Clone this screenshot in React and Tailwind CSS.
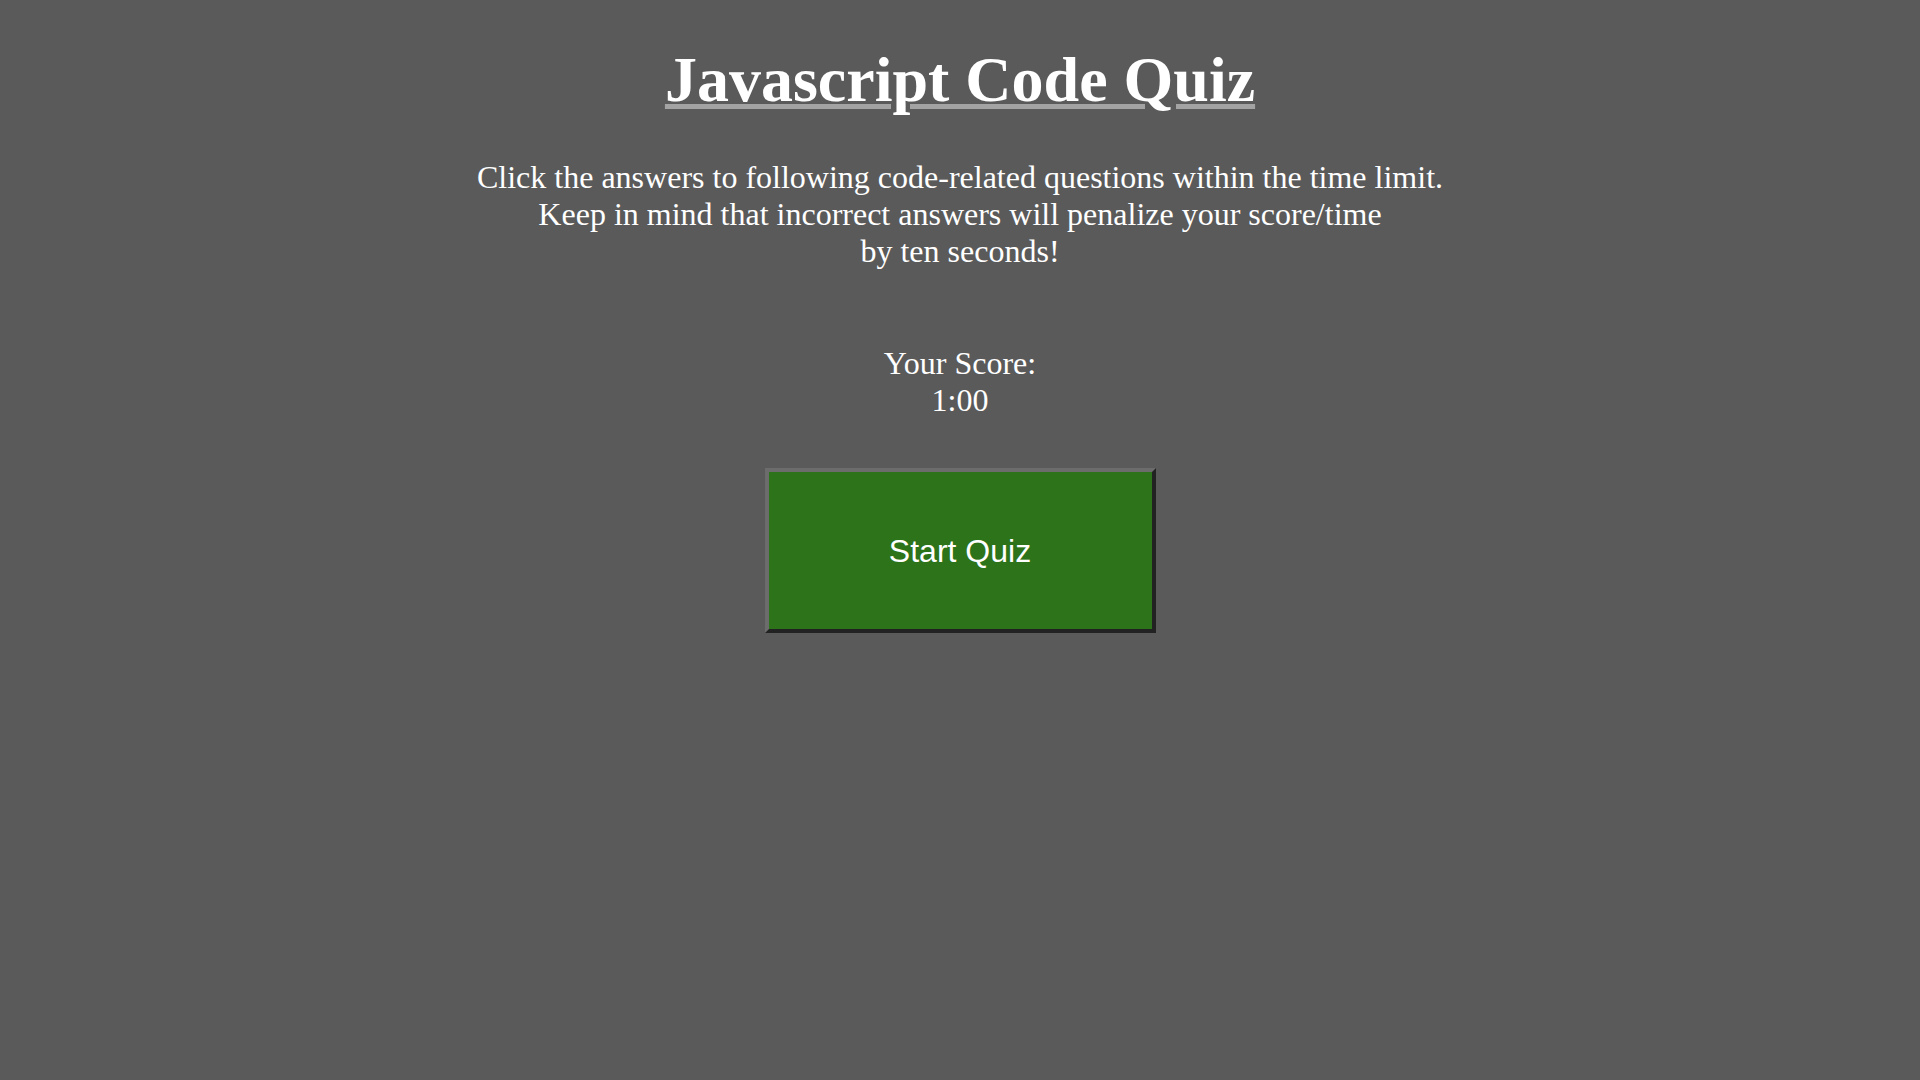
import React from "react";

export default function App() {
  const timeLeft = "1:00";

  return (
    <div className="min-h-screen bg-[#5a5a5a] text-white font-['Liberation_Serif','Times_New_Roman',serif] flex flex-col items-center">
      {/* Title */}
      <h1 className="mt-[43px] text-[64px] leading-[normal] font-bold underline decoration-[#a3a3a3] decoration-[5px] underline-offset-[3px]">
        Javascript Code Quiz
      </h1>

      {/* Instructions */}
      <p className="mt-[42px] text-[32px] leading-[normal] text-center">
        Click the answers to following code-related questions within the time limit.
        <br />
        Keep in mind that incorrect answers will penalize your score/time
        <br />
        by ten seconds!
      </p>

      {/* Score / timer */}
      <div className="mt-[75px] text-[32px] leading-[normal] text-center">
        <div>Your Score:</div>
        <div>{timeLeft}</div>
      </div>

      {/* Start button */}
      <button
        type="button"
        className="mt-[49px] w-[391px] h-[165px] bg-[#2c7319] border-4 border-t-[#6c6c6c] border-l-[#6c6c6c] border-b-[#222222] border-r-[#222222] font-['Liberation_Sans',Arial,sans-serif] text-[32px] text-white cursor-pointer"
      >
        Start Quiz
      </button>
    </div>
  );
}
